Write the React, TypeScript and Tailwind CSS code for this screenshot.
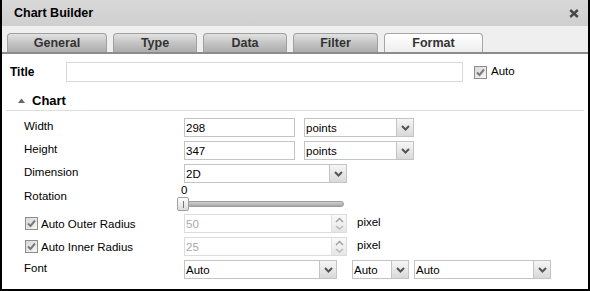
import type { ReactNode } from "react";

const font = "font-['Liberation_Sans','Arial',sans-serif]";

function Chevron() {
  return (
    <svg width="9" height="6" viewBox="0 0 9 6" className="text-[#555]">
      <path d="M1 1 L4.5 4.5 L8 1" stroke="currentColor" strokeWidth="2" fill="none" />
    </svg>
  );
}

function Select({ value, width }: { value: string; width: string }) {
  return (
    <div className={`flex h-[19px] ${width} shrink-0 border border-[#c4c4c4] bg-white`}>
      <span className="flex-1 truncate pl-[1px] pt-[3px] text-[11.5px] leading-[13px] text-black">{value}</span>
      <span className="flex w-[17px] items-center justify-center border-l border-[#c4c4c4] bg-gradient-to-b from-[#f6f6f6] to-[#d9d9d9]">
        <Chevron />
      </span>
    </div>
  );
}

function TextBox({ value, width }: { value: string; width: string }) {
  return (
    <div
      className={`h-[19px] ${width} shrink-0 border border-[#c4c4c4] bg-white pl-[1px] pt-[3px] text-[11.5px] leading-[13px] text-black`}
    >
      {value}
    </div>
  );
}

function Spinner({ value }: { value: string }) {
  return (
    <div className="flex h-[19px] w-[163px] shrink-0 border border-[#dcdcdc] bg-white">
      <span className="flex-1 pl-[1px] pt-[3px] text-[11.5px] leading-[13px] text-[#a8a8a8]">{value}</span>
      <span className="flex w-[15px] flex-col border-l border-[#e2e2e2] bg-gradient-to-b from-[#fafafa] to-[#e6e6e6]">
        <span className="flex h-[10px] items-center justify-center">
          <svg width="9" height="6" viewBox="0 0 9 6">
            <path d="M1 5 L4.5 1.5 L8 5" stroke="#a0a0a0" strokeWidth="1.5" fill="none" />
          </svg>
        </span>
        <span className="flex h-[7px] items-start justify-center">
          <svg width="9" height="5" viewBox="0 0 9 5">
            <path d="M1 1 L4.5 4 L8 1" stroke="#b8b8b8" strokeWidth="1.5" fill="none" />
          </svg>
        </span>
      </span>
    </div>
  );
}

function Check() {
  return (
    <span className="flex h-[13px] w-[13px] shrink-0 items-center justify-center border border-[#8e8e8e] bg-gradient-to-br from-[#d8d8d8] to-[#f6f6f6]">
      <svg width="9" height="9" viewBox="0 0 9 9">
        <path d="M1 4.5 L3.5 7 L8 1.5" stroke="#7a7a7a" strokeWidth="2" fill="none" />
      </svg>
    </span>
  );
}

function Row({ label, children, raise = true }: { label: ReactNode; children: ReactNode; raise?: boolean }) {
  return (
    <div className="flex h-[19px] items-center">
      <div className={`w-[160px] text-[11.5px] leading-[14px] text-black ${raise ? "pb-[4px]" : ""}`}>{label}</div>
      {children}
    </div>
  );
}

function Tab({ label, active, width }: { label: string; active?: boolean; width: string }) {
  return (
    <div
      className={`flex h-[19px] ${width} items-center justify-center rounded-t-[4px] border border-b-0 text-[12.5px] font-bold ${
        active
          ? "border-[#a6a6a6] bg-gradient-to-b from-white to-[#eeeeee] text-[#333]"
          : "border-[#a0a0a0] bg-gradient-to-b from-[#e2e2e2] via-[#c4c4c4] to-[#acacac] text-[#333]"
      }`}
    >
      {label}
    </div>
  );
}

function CheckLabel({ children }: { children: ReactNode }) {
  return (
    <span className="flex items-center gap-[3px] pl-[1px]">
      <Check />
      {children}
    </span>
  );
}

export default function App() {
  return (
    <div className={`${font} flex h-[291px] w-[590px] flex-col border-x-2 border-b-2 border-black bg-white`}>
      <div className="flex h-[26px] shrink-0 items-center justify-between bg-gradient-to-b from-[#d8d8d8] to-[#cfcfcf] pl-[12px] pr-[9px]">
        <span className="text-[12.5px] font-bold text-black">Chart Builder</span>
        <svg width="10" height="9" viewBox="0 0 10 9">
          <path d="M1.2 1 L8.8 8 M8.8 1 L1.2 8" stroke="#4a4a4a" strokeWidth="2.4" />
        </svg>
      </div>
      <div className="flex h-[28px] shrink-0 items-end gap-[6px] border-b-2 border-[#8c8c8c] bg-[#efefef] pl-[5px]">
        <Tab label="General" width="w-[100px]" />
        <Tab label="Type" width="w-[84px]" />
        <Tab label="Data" width="w-[84px]" />
        <Tab label="Filter" width="w-[85px]" />
        <Tab label="Format" width="w-[99px]" active />
      </div>
      <div className="flex flex-col px-[4px]">
        <div className="mt-[8px] flex h-[20px] items-center">
          <span className="w-[60px] pl-[4px] text-[12px] font-bold">Title</span>
          <div className="h-[20px] w-[397px] border border-[#d8d8d8] bg-white" />
          <span className="ml-[11px] flex items-center gap-[4px] text-[11.5px]">
            <Check />
            Auto
          </span>
        </div>
        <div className="mt-[9px] flex h-[20px] items-center gap-[7px] border-b border-[#dedede] pl-[12px]">
          <svg width="7" height="5" viewBox="0 0 7 5">
            <path d="M0 5 L3.5 0.5 L7 5 Z" fill="#666" />
          </svg>
          <span className="text-[13px] font-bold">Chart</span>
        </div>
        <div className="mt-[7px] flex flex-col gap-[4px] pl-[18px]">
          <Row label="Width">
            <TextBox value="298" width="w-[111px]" />
            <div className="ml-[9px]">
              <Select value="points" width="w-[110px]" />
            </div>
          </Row>
          <Row label="Height">
            <TextBox value="347" width="w-[111px]" />
            <div className="ml-[9px]">
              <Select value="points" width="w-[110px]" />
            </div>
          </Row>
          <Row label="Dimension">
            <Select value="2D" width="w-[163px]" />
          </Row>
          <div className="flex h-[23px] items-start">
            <div className="mt-[2px] w-[160px] text-[11.5px] leading-[14px]">Rotation</div>
            <div className="-ml-[7px] flex flex-col">
              <span className="-mt-[2px] h-[10px] pl-[4px] text-[11.5px] leading-[10px]">0</span>
              <div className="relative mt-[2px] flex h-[14px] w-[167px] items-center">
                <div className="h-[6px] w-full rounded-full border border-[#9c9c9c] bg-gradient-to-b from-[#d0d0d0] to-[#a8a8a8]" />
                <div className="absolute left-0 top-0 flex h-[14px] w-[12px] items-center justify-center rounded-[2px] border border-[#a0a0a0] bg-gradient-to-b from-white to-[#dcdcdc]">
                  <div className="h-[7px] w-[1px] bg-[#777]" />
                </div>
              </div>
            </div>
          </div>
          <Row raise={false} label={<CheckLabel>Auto Outer Radius</CheckLabel>}>
            <Spinner value="50" />
            <span className="ml-[10px] pb-[2px] text-[11.5px]">pixel</span>
          </Row>
          <Row raise={false} label={<CheckLabel>Auto Inner Radius</CheckLabel>}>
            <Spinner value="25" />
            <span className="ml-[10px] pb-[2px] text-[11.5px]">pixel</span>
          </Row>
          <Row label="Font">
            <Select value="Auto" width="w-[153px]" />
            <div className="ml-[15px]">
              <Select value="Auto" width="w-[57px]" />
            </div>
            <div className="ml-[5px]">
              <Select value="Auto" width="w-[137px]" />
            </div>
          </Row>
        </div>
      </div>
    </div>
  );
}
